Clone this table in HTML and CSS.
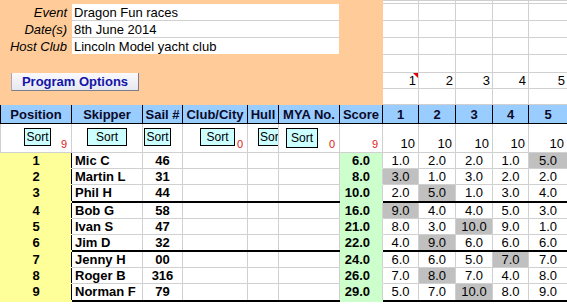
FILE: index.html
```html
<!DOCTYPE html>
<html lang="en">
<head>
	<meta charset="UTF-8">
	<title>Dragon Fun races - results</title>
	<link rel="stylesheet" href="styles.css">
</head>
<body>
<table class="sheet">
	<colgroup>
		<col class="w-pos"><col class="w-skip"><col class="w-sail"><col class="w-club"><col class="w-hull"><col class="w-mya"><col class="w-score">
		<col class="w-r1"><col class="w-r2"><col class="w-r3"><col class="w-r4"><col class="w-r5">
	</colgroup>
	<tbody>
		<!-- event details block -->
		<tr class="r-top">
			<td colspan="7" class="fill"></td>
			<td class="grid"></td><td class="grid"></td><td class="grid"></td><td class="grid"></td><td class="grid"></td>
		</tr>
		<tr class="r-info">
			<td class="fill lbl">Event</td>
			<td colspan="5" class="val">Dragon Fun races</td>
			<td class="fill"></td>
			<td class="grid"></td><td class="grid"></td><td class="grid"></td><td class="grid"></td><td class="grid"></td>
		</tr>
		<tr class="r-info">
			<td class="fill lbl">Date(s)</td>
			<td colspan="5" class="val">8th June 2014</td>
			<td class="fill"></td>
			<td class="grid"></td><td class="grid"></td><td class="grid"></td><td class="grid"></td><td class="grid"></td>
		</tr>
		<tr class="r-info">
			<td class="fill lbl">Host Club</td>
			<td colspan="5" class="val last">Lincoln Model yacht club</td>
			<td class="fill"></td>
			<td class="grid"></td><td class="grid"></td><td class="grid"></td><td class="grid"></td><td class="grid"></td>
		</tr>
		<tr class="r-blank">
			<td colspan="7" class="fill"></td>
			<td class="grid"></td><td class="grid"></td><td class="grid"></td><td class="grid"></td><td class="grid"></td>
		</tr>
		<tr class="r-num">
			<td colspan="7" rowspan="2" class="fill btn-cell"><button class="prog">Program Options</button></td>
			<td class="grid num note">1</td><td class="grid num">2</td><td class="grid num">3</td><td class="grid num">4</td><td class="grid num">5</td>
		</tr>
		<tr class="r-num">
			<td class="grid"></td><td class="grid"></td><td class="grid"></td><td class="grid"></td><td class="grid"></td>
		</tr>

		<!-- column headings -->
		<tr class="head">
			<th>Position</th><th>Skipper</th><th>Sail #</th><th>Club/City</th><th>Hull</th><th>MYA No.</th><th>Score</th>
			<th>1</th><th>2</th><th>3</th><th>4</th><th>5</th>
		</tr>

		<!-- sort buttons + counts -->
		<tr class="sorts">
			<td><div class="sbox"><button class="sort s-pos">Sort</button><span class="count">9</span></div></td>
			<td><div class="sbox"><button class="sort s-skip">Sort</button></div></td>
			<td><div class="sbox"><button class="sort s-sail">Sort</button></div></td>
			<td><div class="sbox"><button class="sort s-club">Sort</button><span class="count">0</span></div></td>
			<td><div class="sbox"><button class="sort s-hull">Sor</button></div></td>
			<td><div class="sbox"><button class="sort s-mya">Sort</button><span class="count">0</span></div></td>
			<td><div class="sbox"><span class="count">9</span></div></td>
			<td class="total">10</td><td class="total">10</td><td class="total">10</td><td class="total">10</td><td class="total">10</td>
		</tr>

		<!-- results -->
		<tr class="res">
			<td class="pos">1</td><td class="name">Mic C</td><td class="sail">46</td><td></td><td></td><td></td><td class="score">6.0</td>
			<td class="race">1.0</td><td class="race">2.0</td><td class="race">2.0</td><td class="race">1.0</td><td class="race drop">5.0</td>
		</tr>
		<tr class="res">
			<td class="pos">2</td><td class="name">Martin L</td><td class="sail">31</td><td></td><td></td><td></td><td class="score">8.0</td>
			<td class="race drop">3.0</td><td class="race">1.0</td><td class="race">3.0</td><td class="race">2.0</td><td class="race">2.0</td>
		</tr>
		<tr class="res grp-end">
			<td class="pos">3</td><td class="name">Phil H</td><td class="sail">44</td><td></td><td></td><td></td><td class="score">10.0</td>
			<td class="race">2.0</td><td class="race drop">5.0</td><td class="race">1.0</td><td class="race">3.0</td><td class="race">4.0</td>
		</tr>
		<tr class="res">
			<td class="pos">4</td><td class="name">Bob G</td><td class="sail">58</td><td></td><td></td><td></td><td class="score">16.0</td>
			<td class="race drop">9.0</td><td class="race">4.0</td><td class="race">4.0</td><td class="race">5.0</td><td class="race">3.0</td>
		</tr>
		<tr class="res">
			<td class="pos">5</td><td class="name">Ivan S</td><td class="sail">47</td><td></td><td></td><td></td><td class="score">21.0</td>
			<td class="race">8.0</td><td class="race">3.0</td><td class="race drop">10.0</td><td class="race">9.0</td><td class="race">1.0</td>
		</tr>
		<tr class="res grp-end">
			<td class="pos">6</td><td class="name">Jim D</td><td class="sail">32</td><td></td><td></td><td></td><td class="score">22.0</td>
			<td class="race">4.0</td><td class="race drop">9.0</td><td class="race">6.0</td><td class="race">6.0</td><td class="race">6.0</td>
		</tr>
		<tr class="res">
			<td class="pos">7</td><td class="name">Jenny H</td><td class="sail">00</td><td></td><td></td><td></td><td class="score">24.0</td>
			<td class="race">6.0</td><td class="race">6.0</td><td class="race">5.0</td><td class="race drop">7.0</td><td class="race">7.0</td>
		</tr>
		<tr class="res">
			<td class="pos">8</td><td class="name">Roger B</td><td class="sail">316</td><td></td><td></td><td></td><td class="score">26.0</td>
			<td class="race">7.0</td><td class="race drop">8.0</td><td class="race">7.0</td><td class="race">4.0</td><td class="race">8.0</td>
		</tr>
		<tr class="res grp-end">
			<td class="pos">9</td><td class="name">Norman F</td><td class="sail">79</td><td></td><td></td><td></td><td class="score">29.0</td>
			<td class="race">5.0</td><td class="race">7.0</td><td class="race drop">10.0</td><td class="race">8.0</td><td class="race">9.0</td>
		</tr>
	</tbody>
</table>
</body>
</html>
```

FILE: styles.css
```css
body {
	margin: 0;
	background: #fff;
	font-family: "Liberation Sans", Arial, sans-serif;
	font-size: 13px;
	color: #000;
}

.sheet {
	border-collapse: collapse;
	table-layout: fixed;
	width: 567px;
}
.sheet td, .sheet th {
	padding: 0;
	white-space: nowrap;
	overflow: hidden;
	border: 1px solid #d0d0d0;
}

/* column widths */
.w-pos { width: 71px; }
.w-skip { width: 71px; }
.w-sail { width: 40px; }
.w-club { width: 65px; }
.w-hull { width: 31px; }
.w-mya { width: 61px; }
.w-score { width: 43px; }
.w-r1 { width: 36px; }
.w-r2 { width: 37px; }
.w-r3 { width: 37px; }
.w-r4 { width: 36px; }
.w-r5 { width: 39px; }

/* row heights */
.r-top { height: 3px; }
.r-info { height: 17px; line-height: 15px; }
.r-blank { height: 18px; }
.r-num { height: 16px; }
.head { height: 19px; }
.sorts { height: 28px; }
.res { height: 16px; line-height: 15px; }
.res.grp-end { height: 17px; }

/* orange event block */
.sheet td.fill {
	background: #ffcc99;
	border-color: #ffcc99;
}
.sheet td.lbl {
	text-align: right;
	font-style: italic;
	padding-right: 4px;
}
.sheet td.val {
	background: #fff;
	border-left-color: #ffcc99;
	border-right-color: #ffcc99;
	border-top-color: #ffcc99;
	padding-left: 2px;
}
.sheet td.val.last {
	border-bottom-color: #ffcc99;
}
.r-info + .r-info td.val {
	border-top-color: #d0d0d0;
}

.btn-cell {
	vertical-align: top;
}
.prog {
	display: block;
	margin: -2px 0 0 10px;
	width: 128px;
	height: 20px;
	padding: 0;
	font-family: "Liberation Sans", Arial, sans-serif;
	font-size: 13px;
	font-weight: bold;
	color: #1414a8;
	background: linear-gradient(#fbfbfd, #e6e8f0);
	border: 1px solid #a8a8b8;
	border-right-color: #7c7c8c;
	border-bottom-color: #7c7c8c;
}

.num {
	text-align: right;
	padding-right: 2px !important;
	vertical-align: bottom;
}
.note {
	position: relative;
}
/* comment marker */
.note::after {
	content: "";
	position: absolute;
	top: 0;
	right: 0;
	border-top: 5px solid #e00000;
	border-left: 5px solid transparent;
}

/* headings */
.head th {
	background: #99ccff;
	border: 1px solid #000;
	font-size: 13px;
	font-weight: bold;
	text-align: center;
	color: #0a0a2a;
}

/* sort row */
.sorts td {
	vertical-align: top;
}
.sbox {
	display: flex;
	height: 28px;
}
.sort {
	flex-shrink: 0;
	align-self: flex-start;
	margin-top: 4px;
	height: 18px;
	padding: 0;
	font-family: "Liberation Sans", Arial, sans-serif;
	font-size: 12px;
	background: #ccffff;
	border: 1px solid #000;
	color: #000;
}
.s-pos { margin-left: 23px; width: 27px; }
.s-skip { margin-left: 15px; width: 40px; }
.s-sail { margin-left: 1px; width: 27px; }
.s-club { margin-left: 17px; width: 35px; }
.s-hull { margin-left: 10px; width: 21px; text-align: left; padding-left: 1px; border-right: none; }
.s-mya { margin-left: 7px; width: 32px; height: 20px; }
.count {
	margin-left: auto;
	align-self: flex-end;
	padding: 0 4px 2px 0;
	font-size: 11px;
	line-height: 12px;
	color: #e01818;
}
.sorts td.total {
	vertical-align: bottom;
	text-align: right;
	padding-right: 3px;
	line-height: 16px;
}

/* result rows */
.sheet td.pos {
	background: #ffff99;
	border-top-color: #ffff99;
	border-bottom-color: #ffff99;
	border-left-color: #ffff99;
	border-right: 1px solid #000;
	font-weight: bold;
	text-align: center;
}
.name {
	font-weight: bold;
	padding-left: 3px !important;
}
.sail {
	font-weight: bold;
	text-align: center;
}
.sheet td.score {
	background: #ccffcc;
	border-color: #ccffcc;
	border-right-color: #d0d0d0;
	font-weight: bold;
	text-align: right;
	padding-right: 12px;
}
.race {
	text-align: center;
}
.race.drop {
	background: #c0c0c0;
}
.grp-end td {
	border-bottom: 2px solid #000;
}
.sheet .grp-end td.pos {
	border-bottom: 2px solid #ffff99;
}
```
